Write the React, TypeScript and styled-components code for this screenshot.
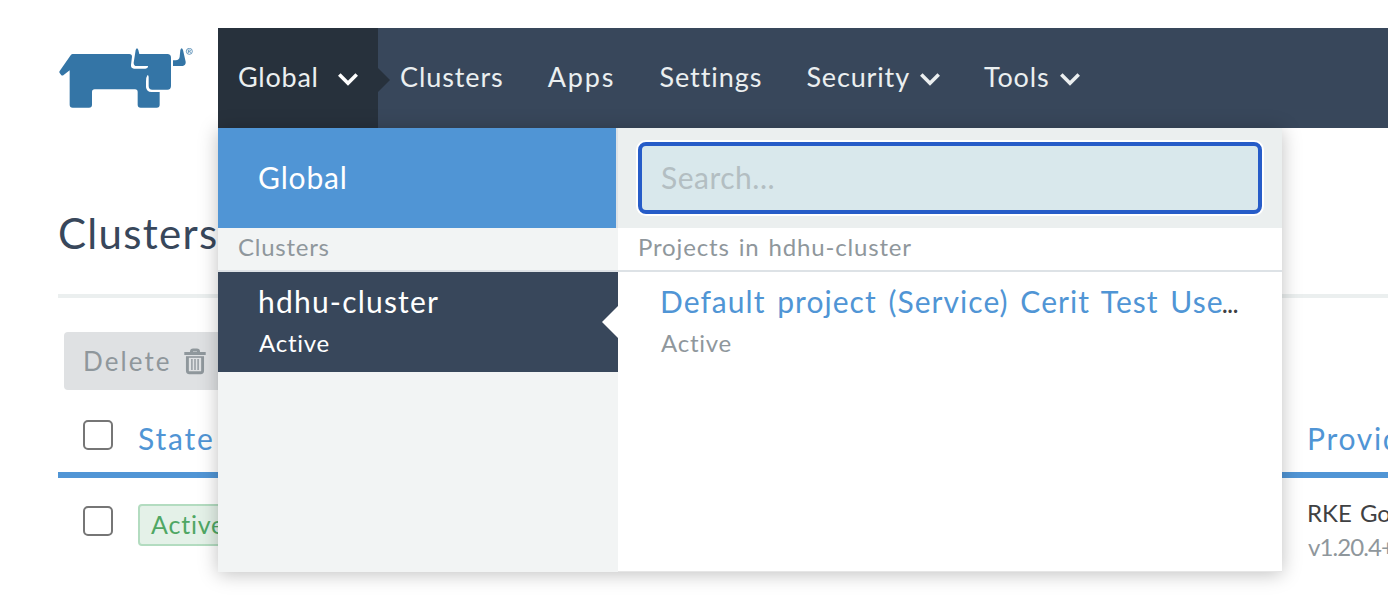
import React from 'react';
import styled, { createGlobalStyle } from 'styled-components';

const color = {
  navy: '#38475b',
  navyDark: '#27313c',
  blue: '#5095d5',
  logo: '#3475a6',
  muted: '#8f979c',
  mist: '#ebefef',
  line: '#dde2e6',
};

const GlobalStyle = createGlobalStyle`
  * { box-sizing: border-box; }
  body {
    margin: 0;
    background: #fff;
    color: #3f4143;
    font-family: Lato, 'Liberation Sans', sans-serif;
    overflow: hidden;
  }
`;

const Page = styled.div`
  height: 600px;
  padding-top: 28px;
  overflow: hidden;
  white-space: nowrap;
`;

const Header = styled.header`
  position: relative;
  display: flex;
  height: 100px;
`;

const LogoCell = styled.div`
  width: 218px;
  padding: 20px 0 0 58px;
  flex: none;
`;

const Nav = styled.nav`
  display: flex;
  flex: 1;
  background: ${color.navy};
`;

const Label = styled.span<{ $track?: number }>`
  letter-spacing: ${(p) => p.$track ?? 0}px;
`;

const ScopeTab = styled.div`
  position: relative;
  display: flex;
  align-items: center;
  justify-content: space-between;
  width: 160px;
  padding: 0 20px 4px 20px;
  background: ${color.navyDark};
  color: #ebeff0;
  font-size: 27px;

  &::after {
    content: '';
    position: absolute;
    left: 100%;
    top: 40px;
    border: solid transparent;
    border-width: 12px 0 12px 12px;
    border-left-color: ${color.navyDark};
  }
`;

const NavItems = styled.div`
  display: flex;
  align-items: center;
  gap: 44px;
  padding: 0 0 4px 22px;
  color: #ebeff0;
  font-size: 27px;
`;

const NavItem = styled.a`
  display: flex;
  align-items: center;
  gap: 10px;
`;

const ChevronSvg = styled.svg`
  display: block;
  margin-top: 6px;
`;

const Dropdown = styled.section`
  position: absolute;
  z-index: 2;
  left: 218px;
  top: 100px;
  display: flex;
  align-items: flex-start;
  width: 1064px;
  box-shadow: 0 2px 18px rgba(0, 0, 0, 0.25);
`;

const ClusterPane = styled.div`
  width: 400px;
  height: 444px;
  background: #f2f4f4;
`;

const ProjectPane = styled.div`
  flex: 1;
  min-width: 0;
  height: 444px;
  border-bottom: 1px solid #e6e6e6;
  background: #fff;
`;

const GlobalRow = styled.div`
  height: 100px;
  padding: 0 0 0 40px;
  line-height: 98px;
  border-right: 2px solid ${color.line};
  background: ${color.blue};
  color: #fff;
  font-size: 30px;
`;

const SearchRow = styled.div`
  height: 100px;
  padding: 14px 20px;
  background: ${color.mist};
`;

const SearchInput = styled.input`
  display: block;
  width: 100%;
  height: 72px;
  padding: 0 19px 3px;
  border: 4px solid #265cc8;
  border-radius: 8px;
  outline: none;
  background: #d9e8ec;
  box-shadow: 0 0 0 2px #fff;
  font: 30px Lato, 'Liberation Sans', sans-serif;
  letter-spacing: 0.5px;

  &::placeholder {
    color: #b3bec2;
    opacity: 1;
  }
`;

const GroupTitle = styled.div`
  height: 44px;
  padding-left: 20px;
  line-height: 38px;
  border-bottom: 2px solid ${color.line};
  color: ${color.muted};
  font-size: 24px;
  word-spacing: 2px;
`;

const Entry = styled.div<{ $selected?: boolean }>`
  position: relative;
  height: 100px;
  padding: 9px 20px 0 ${(p) => (p.$selected ? 40 : 42)}px;
  background: ${(p) => (p.$selected ? color.navy : 'transparent')};
  color: ${(p) => (p.$selected ? '#fff' : color.muted)};
`;

const EntryArrow = styled.span`
  position: absolute;
  right: 0;
  top: 34px;
  border: solid transparent;
  border-width: 16px 16px 16px 0;
  border-right-color: #fff;
`;

const EntryName = styled.div`
  height: 41px;
  font-size: 30px;
  line-height: 41px;
  word-spacing: 3px;
`;

const ProjectLink = styled.a`
  color: ${color.blue};
  letter-spacing: 1.04px;
`;

const Ellipsis = styled.span`
  color: #3f4143;
  letter-spacing: -0.7px;
  font-size: 26px;
  margin-left: -2px;
`;

const EntryState = styled.div`
  padding-left: 1px;
  font-size: 24px;
  line-height: 42px;
`;

const Main = styled.main`
  padding-left: 58px;
`;

const PageTitle = styled.h1`
  height: 170px;
  margin: 0;
  padding-top: 75px;
  border-bottom: 4px solid ${color.mist};
  color: ${color.navy};
  font-size: 42px;
  font-weight: 400;
  line-height: 60px;
`;

const DeleteButton = styled.div`
  display: flex;
  align-items: center;
  gap: 12px;
  width: 190px;
  height: 58px;
  margin: 34px 0 0 6px;
  padding: 0 0 1px 19px;
  border-radius: 4px;
  background: #dfe1e3;
  color: ${color.muted};
  font-size: 26px;
`;

const TrashSvg = styled.svg`
  display: block;
  margin-top: 2px;
`;

const TableRow = styled.div<{ $head?: boolean }>`
  display: grid;
  grid-template-columns: 80px 1169px 1fr;
  height: ${(p) => (p.$head ? 88 : 110)}px;
  padding-top: ${(p) => (p.$head ? 30 : 26)}px;
  border-bottom: ${(p) => (p.$head ? `6px solid ${color.blue}` : '0')};
`;

const Checkbox = styled.span<{ $drop?: number }>`
  width: 30px;
  height: 30px;
  margin: ${(p) => p.$drop ?? 0}px 0 0 25px;
  border: 2px solid #767676;
  border-radius: 5px;
  background: #fff;
`;

const HeadCell = styled.div`
  color: ${color.blue};
  font-size: 30px;
  line-height: 37px;
`;

const StateBadge = styled.span`
  display: block;
  width: 120px;
  height: 42px;
  padding-left: 11px;
  line-height: 37px;
  border: 2px solid #b3dcc0;
  border-radius: 4px;
  background: #e4f1e8;
  color: #4fa764;
  font-size: 25px;
`;

const Provider = styled.div`
  margin-top: -8px;
  font-size: 24px;
  line-height: 34px;
  word-spacing: 2px;
`;

const Version = styled.div`
  padding-left: 1px;
  color: ${color.muted};
`;

const Chevron = ({ tint = '#ebeff0' }: { tint?: string }) => (
  <ChevronSvg width="20" height="13" viewBox="0 0 20 13" fill="none" stroke={tint} strokeWidth="3.6">
    <path d="M1.300 1.500L10 10.200L18.700 1.500" />
  </ChevronSvg>
);

const Trash = () => (
  <TrashSvg width="22" height="27" viewBox="0 0 22 27" fill="none" stroke={color.muted}>
    <path d="M0.300 5.500H21.700" strokeWidth="3" />
    <path d="M7.500 5V3.600Q7.500 2 9.200 2H12.800Q14.500 2 14.500 3.600V5" strokeWidth="3" />
    <path d="M3.400 9V22.800Q3.400 24.800 5.400 24.800H16.600Q18.600 24.800 18.600 22.800V9" strokeWidth="2.900" />
    <path d="M2 9H20" strokeWidth="1.600" />
    <path d="M7.900 11V22M11 11V22M14.100 11V22" strokeWidth="1.400" />
  </TrashSvg>
);

const Logo = () => (
  <svg width="136" height="62" viewBox="54 54 408 186" fill={color.logo}>
    <path d="M98 72H268Q276 72 276 80L273 104Q272 116 282 116H316Q325 114 324 108H290Q281 108 281 98L287 60Q291 50 295 60L298 72H382Q393 72 393 83V168Q393 179 382 179H337Q326 179 326 168V142Q326 134 322 136Q318 142 318 154V172Q320 186 334 186H359V224Q359 233 350 233H302Q293 233 293 224V186Q293 178 285 178H164Q156 178 156 186V224Q156 233 147 233H98Q89 233 89 224V121L70 136Q66 138 63 134L59 129Q57 126 59 123L92 76Q95 72 98 72Z" />
    <path d="M399 91H407Q418 90 419 80L421 60Q425 50 429 60L437 95Q438 107 428 108H399Z" />
    <circle cx="448" cy="64" r="9" fill="none" stroke={color.logo} strokeWidth="2.200" />
    <path d="M445 69V60H449Q451.500 60 451.500 62.200Q451.500 64.500 449 64.800H445M449 65L452 69" fill="none" stroke={color.logo} strokeWidth="2" />
  </svg>
);

export default function App() {
  return (
    <Page>
      <GlobalStyle />
      <Header>
        <LogoCell><Logo /></LogoCell>
        <Nav>
          <ScopeTab>
            <Label $track={0.75}>Global</Label>
            <Chevron tint="#fff" />
          </ScopeTab>
          <NavItems>
            <NavItem><Label $track={0.9}>Clusters</Label></NavItem>
            <NavItem><Label $track={1.9}>Apps</Label></NavItem>
            <NavItem><Label $track={0.95}>Settings</Label></NavItem>
            <NavItem><Label $track={0.85}>Security</Label><Chevron /></NavItem>
            <NavItem><Label $track={0.85}>Tools</Label><Chevron /></NavItem>
          </NavItems>
        </Nav>
        <Dropdown>
          <ClusterPane>
            <GlobalRow><Label $track={0.85}>Global</Label></GlobalRow>
            <GroupTitle><Label $track={0.75}>Clusters</Label></GroupTitle>
            <Entry $selected>
              <EntryName><Label $track={1.2}>hdhu-cluster</Label></EntryName>
              <EntryState><Label $track={0.75}>Active</Label></EntryState>
              <EntryArrow />
            </Entry>
          </ClusterPane>
          <ProjectPane>
            <SearchRow><SearchInput placeholder="Search..." /></SearchRow>
            <GroupTitle><Label $track={0.84}>Projects in hdhu-cluster</Label></GroupTitle>
            <Entry>
              <EntryName>
                <ProjectLink>Default project (Service) Cerit Test Use</ProjectLink>
                <Ellipsis>...</Ellipsis>
              </EntryName>
              <EntryState><Label $track={0.75}>Active</Label></EntryState>
            </Entry>
          </ProjectPane>
        </Dropdown>
      </Header>
      <Main>
        <PageTitle><Label $track={1.3}>Clusters</Label></PageTitle>
        <DeleteButton>
          <Label $track={2.1}>Delete</Label>
          <Trash />
        </DeleteButton>
        <TableRow $head>
          <Checkbox />
          <HeadCell><Label $track={1.8}>State</Label></HeadCell>
          <HeadCell><Label $track={1.7}>Provider</Label></HeadCell>
        </TableRow>
        <TableRow>
          <Checkbox $drop={2} />
          <StateBadge><Label $track={0.8}>Active</Label></StateBadge>
          <Provider>
            <Label>RKE Google</Label>
            <Version><Label $track={-0.9}>v1.20.4+rke2r1</Label></Version>
          </Provider>
        </TableRow>
      </Main>
    </Page>
  );
}
